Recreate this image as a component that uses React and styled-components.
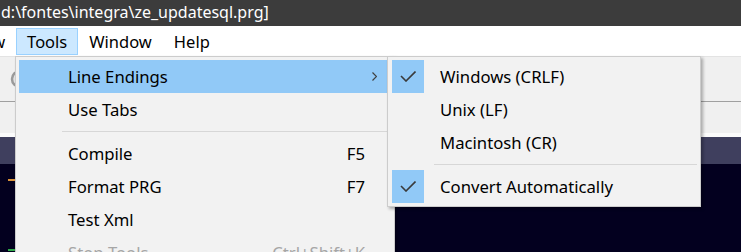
import React from "react";
import styled, { createGlobalStyle } from "styled-components";

const GlobalStyle = createGlobalStyle`
  html, body {
    margin: 0;
    padding: 0;
    width: 741px;
    height: 252px;
    overflow: hidden;
    background: #f0f0f0;
  }
  body {
    font-family: "Noto Sans", "Open Sans", sans-serif;
  }
`;

const Window = styled.div`
  position: relative;
  width: 741px;
  height: 252px;
  display: flex;
  flex-direction: column;
  overflow: hidden;
`;

const TitleBar = styled.div`
  height: 26px;
  flex: none;
  background: #3c3c3c;
  color: #ffffff;
  font-size: 16px;
  line-height: 24px;
  padding-left: 1px;
  white-space: nowrap;
`;

const MenuBar = styled.div`
  height: 30px;
  flex: none;
  background: #ffffff;
  display: flex;
  align-items: flex-start;
  padding-top: 2px;
  box-sizing: border-box;
`;

const MenuBarItem = styled.div`
  height: 27px;
  box-sizing: border-box;
  padding: 0 10px;
  margin-left: ${(p) => p.$offset || 0}px;
  border: 1px solid ${(p) => (p.$open ? "#99d1ff" : "transparent")};
  background: ${(p) => (p.$open ? "#cce8ff" : "transparent")};
  font-size: 16.5px;
  line-height: 25px;
  color: #000;
`;

const Toolbar = styled.div`
  height: 46px;
  flex: none;
  box-sizing: border-box;
  border-top: 1px solid #e3e3e3;
  border-bottom: 1px solid #a0a0a0;
  display: flex;
  align-items: center;
  padding-left: 10px;
`;

const TabStrip = styled.div`
  height: 35px;
  flex: none;
  box-sizing: border-box;
  border-bottom: 4px solid #fbfbfb;
`;

const EditorHeader = styled.div`
  height: 27px;
  flex: none;
  background: #3f3f5e;
`;

const Editor = styled.div`
  flex: 1;
  background: #03001f;
  display: flex;
  flex-direction: column;
  padding-top: 15px;
`;

const Marker = styled.div`
  width: 7px;
  height: 2px;
  margin-left: 8px;
  background: ${(p) => p.$color};
  margin-top: ${(p) => p.$top || 0}px;
`;

const Dropdown = styled.div`
  position: absolute;
  left: ${(p) => p.$left}px;
  top: ${(p) => p.$top}px;
  width: ${(p) => p.$width}px;
  height: ${(p) => p.$height}px;
  box-sizing: border-box;
  background: #f2f2f2;
  border: 1px solid #cccccc;
  box-shadow: 2px 2px 3px rgba(0, 0, 0, 0.3);
  padding: 3px;
  display: flex;
  flex-direction: column;
`;

const Row = styled.div`
  height: 33px;
  flex: none;
  display: grid;
  grid-template-columns: 49px 1fr auto 26px;
  align-items: center;
  background: ${(p) => (p.$active ? "#91c9f7" : "transparent")};
  color: ${(p) => (p.$disabled ? "#a6a6a6" : "#000")};
  font-size: 16.7px;
  white-space: nowrap;
`;

const CheckCell = styled.div`
  width: 32px;
  height: 33px;
  margin-left: 1px;
  display: flex;
  align-items: center;
  justify-content: center;
  background: ${(p) => (p.$checked ? "#91c9f7" : "transparent")};
`;

const Shortcut = styled.span`
  text-align: right;
`;

const ArrowCell = styled.div`
  display: flex;
  align-items: center;
  padding-left: 7px;
`;

const Separator = styled.div`
  height: 11px;
  flex: none;
  display: flex;
  align-items: center;
  padding-left: 43px;
  &::after {
    content: "";
    flex: 1;
    height: 1px;
    background: #d7d7d7;
  }
`;

const Check = () => (
  <svg width="16" height="11" viewBox="0 0 16 11">
    <polyline
      points="1,5 6,10 15.5,0.5"
      fill="none"
      stroke="#3a3a3a"
      strokeWidth="1.6"
    />
  </svg>
);

const Chevron = () => (
  <svg width="5" height="9" viewBox="0 0 5 9">
    <polyline points="0.5,0.5 4.5,4.5 0.5,8.5" fill="none" stroke="#404040" strokeWidth="1.2" />
  </svg>
);

const MenuRow = ({ label, shortcut, active, disabled, checked, arrow }) => (
  <Row $active={active} $disabled={disabled}>
    <CheckCell $checked={checked}>{checked && <Check />}</CheckCell>
    <span>{label}</span>
    <Shortcut>{shortcut}</Shortcut>
    <ArrowCell>{arrow && <Chevron />}</ArrowCell>
  </Row>
);

export default function App() {
  return (
    <>
      <GlobalStyle />
      <Window>
        <TitleBar>d:\fontes\integra\ze_updatesql.prg]</TitleBar>
        <MenuBar>
          <MenuBarItem $offset={-42}>View</MenuBarItem>
          <MenuBarItem $open>Tools</MenuBarItem>
          <MenuBarItem>Window</MenuBarItem>
          <MenuBarItem>Help</MenuBarItem>
        </MenuBar>
        <Toolbar>
          <svg width="20" height="20" viewBox="0 0 20 20">
            <circle cx="10" cy="10" r="8" fill="#e6e6e6" stroke="#9a9a9a" strokeWidth="2.5" />
          </svg>
        </Toolbar>
        <TabStrip />
        <EditorHeader />
        <Editor>
          <Marker $color="#d9923a" />
          <Marker $color="#2fa84a" $top={68} />
        </Editor>

        <Dropdown $left={15} $top={56} $width={380} $height={220}>
          <MenuRow label="Line Endings" active arrow />
          <MenuRow label="Use Tabs" />
          <Separator />
          <MenuRow label="Compile" shortcut="F5" />
          <MenuRow label="Format PRG" shortcut="F7" />
          <MenuRow label="Test Xml" />
          <MenuRow label="Stop Tools" shortcut="Ctrl+Shift+K" disabled />
        </Dropdown>

        <Dropdown $left={387} $top={56} $width={314} $height={151}>
          <MenuRow label="Windows (CRLF)" checked />
          <MenuRow label="Unix (LF)" />
          <MenuRow label="Macintosh (CR)" />
          <Separator />
          <MenuRow label="Convert Automatically" checked />
        </Dropdown>
      </Window>
    </>
  );
}
